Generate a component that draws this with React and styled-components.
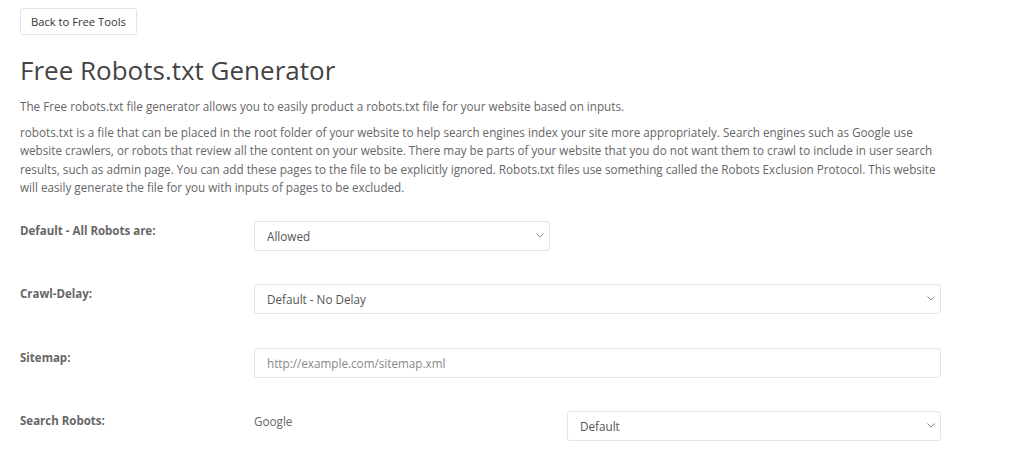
import styled, { createGlobalStyle } from 'styled-components';

const GlobalStyle = createGlobalStyle`
  body {
    margin: 0;
    background: #fff;
    font-family: 'Open Sans', 'Noto Sans', sans-serif;
    color: #666;
  }
`;

const Page = styled.main`
  width: 921px;
  padding: 8px 20px 0;
`;

const BackButton = styled.button`
  display: inline-block;
  height: 27px;
  padding: 0 10px;
  font-family: inherit;
  font-size: 11.2px;
  color: #333;
  background: #fff;
  border: 1px solid #e3e3e3;
  border-radius: 3px;
`;

const Title = styled.h1`
  margin: 17px 0 9px;
  font-size: 26px;
  font-weight: 400;
  line-height: 36px;
  color: #444;
`;

const Text = styled.p`
  margin: 0 0 7px;
  font-size: 11.7px;
  line-height: 18.5px;
  color: #666;
`;

const Form = styled.form`
  display: flex;
  flex-direction: column;
  gap: 33.5px;
  margin-top: 24px;
`;

const Row = styled.div`
  display: grid;
  grid-template-columns: 234px 1fr;
  align-items: start;
`;

const Label = styled.label`
  padding-top: 1px;
  font-size: 11.5px;
  line-height: 18px;
  font-weight: 700;
  color: #666;
`;

const Field = styled.div`
  position: relative;
  width: ${(p) => p.$width || '100%'};
`;

const controlStyles = `
  box-sizing: border-box;
  width: 100%;
  height: 30px;
  padding: 0 12px;
  font-family: inherit;
  font-size: 11.7px;
  color: #555;
  background: #fff;
  border: 1px solid #e4e4e4;
  border-radius: 3px;
  outline: 0;
`;

const Select = styled.select`
  ${controlStyles}
  appearance: none;
`;

const Input = styled.input`
  ${controlStyles}

  &::placeholder {
    color: #888;
  }
`;

const Chevron = styled.svg`
  position: absolute;
  right: 6px;
  top: 12px;
  width: 8px;
  height: 5px;
  pointer-events: none;
`;

const Split = styled.div`
  display: grid;
  grid-template-columns: 313px 1fr;
  align-items: start;
`;

const Engine = styled.span`
  padding-top: 1px;
  font-size: 11.7px;
  line-height: 18px;
  color: #666;
`;

const Dropdown = ({ value, width }) => (
  <Field $width={width}>
    <Select defaultValue={value}>
      <option>{value}</option>
    </Select>
    <Chevron viewBox="0 0 8 5">
      <path d="M0.5 0.5 L4 4 L7.5 0.5" fill="none" stroke="#888" strokeWidth="1" />
    </Chevron>
  </Field>
);

const App = () => (
  <Page>
    <GlobalStyle />
    <BackButton type="button">Back to Free Tools</BackButton>
    <Title>Free Robots.txt Generator</Title>
    <Text>
      The Free robots.txt file generator allows you to easily product a robots.txt file for your website based on inputs.
    </Text>
    <Text>
      robots.txt is a file that can be placed in the root folder of your website to help search engines index your site
      more appropriately. Search engines such as Google use website crawlers, or robots that review all the content on
      your website. There may be parts of your website that you do not want them to crawl to include in user search
      results, such as admin page. You can add these pages to the file to be explicitly ignored. Robots.txt files use
      something called the Robots Exclusion Protocol. This website will easily generate the file for you with inputs of
      pages to be excluded.
    </Text>
    <Form>
      <Row>
        <Label>Default - All Robots are:</Label>
        <Dropdown value="Allowed" width="296px" />
      </Row>
      <Row>
        <Label>Crawl-Delay:</Label>
        <Dropdown value="Default - No Delay" />
      </Row>
      <Row>
        <Label>Sitemap:</Label>
        <Field>
          <Input placeholder="http://example.com/sitemap.xml" />
        </Field>
      </Row>
      <Row>
        <Label>Search Robots:</Label>
        <Split>
          <Engine>Google</Engine>
          <Dropdown value="Default" />
        </Split>
      </Row>
    </Form>
  </Page>
);

export default App;
